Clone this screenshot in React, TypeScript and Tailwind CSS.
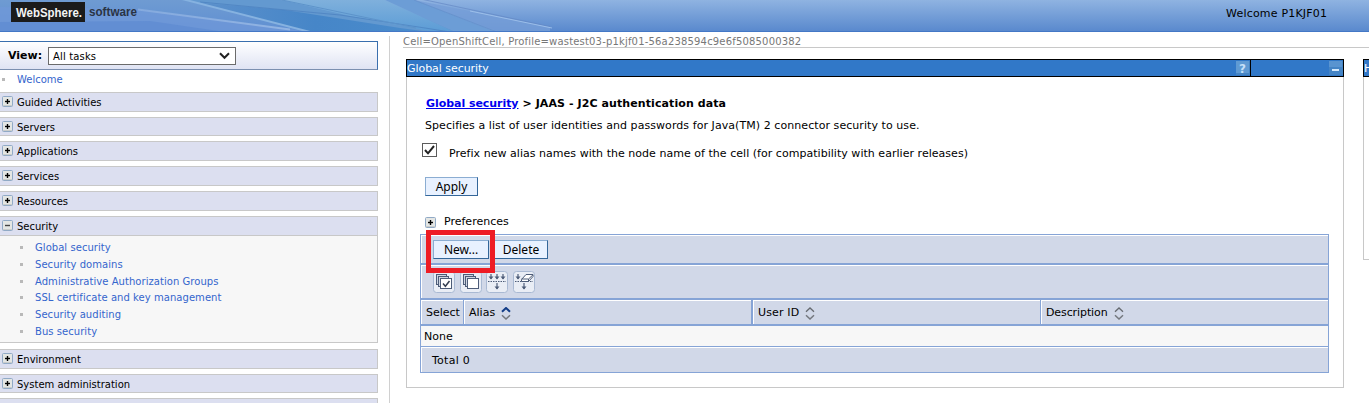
import React from "react";

function Banner() {
  return (
    <header className="relative h-8 w-full shrink-0 overflow-hidden">
      <svg className="block h-8 w-full" viewBox="0 0 1369 32" preserveAspectRatio="none">
        <defs>
          <linearGradient id="sky" x1="0" y1="0" x2="0" y2="1">
            <stop offset="0" stopColor="#8fb3e1" />
            <stop offset="1" stopColor="#5888cd" />
          </linearGradient>
          <linearGradient id="left" x1="0" y1="0" x2="0" y2="1">
            <stop offset="0" stopColor="#6f9bd2" />
            <stop offset="1" stopColor="#5f8fd2" />
          </linearGradient>
          <linearGradient id="cyan" x1="0" y1="0" x2="0" y2="1">
            <stop offset="0" stopColor="#7fb0dc" />
            <stop offset="1" stopColor="#5b9cd6" />
          </linearGradient>
          <linearGradient id="deep" x1="0" y1="0" x2="1" y2="0">
            <stop offset="0" stopColor="#5c90cb" />
            <stop offset="0.5" stopColor="#4686c8" />
            <stop offset="1" stopColor="#4a8ccc" />
          </linearGradient>
          <linearGradient id="fade" gradientUnits="userSpaceOnUse" x1="138" y1="0" x2="290" y2="0">
            <stop offset="0" stopColor="#9cbce6" stopOpacity="0.5" />
            <stop offset="1" stopColor="#9cbce6" stopOpacity="0.8" />
          </linearGradient>
        </defs>
        <rect width="1369" height="32" fill="url(#sky)" />
        <path d="M0 0H285L420 32H0Z" fill="url(#left)" />
        <path d="M0 7L138 9L290 29L310 32H0Z" fill="#7199d9" opacity="0.7" />
        <path d="M0 22L150 21L225 32H0Z" fill="#5c88d0" opacity="0.6" />
        <path d="M182 0H280L415 26L460 32H312Z" fill="#6399d0" />
        <path d="M200 3L285 10L400 28L430 32H310Z" fill="url(#deep)" />
        <path d="M282 0H385L455 32H435L350 16Z" fill="url(#cyan)" />
        <path d="M200 2L340 15L425 28L450 32" stroke="#4a80be" strokeWidth="0.7" fill="none" />
        <path d="M385 0H414L500 32H455Z" fill="#6c9dd6" />
        <path d="M414 0L550 27V32H495Z" fill="#769dd7" opacity="0.8" />
        <path d="M282 0L416 28" stroke="#5d93ca" strokeWidth="1" />
        <path d="M414 0L497 32" stroke="#6490cc" strokeWidth="0.8" />
        <path d="M416 -2L550 26.5" stroke="#6488c4" strokeWidth="0.7" />
        <path d="M470 11L552 28" stroke="#a6c6ed" strokeWidth="0.8" />
        <path d="M138 9.5L290 29.5" stroke="url(#fade)" strokeWidth="1.8" />
        <path d="M182 -1L310 32" stroke="#86b2e0" strokeWidth="2" />
        <rect y="31" width="1369" height="1" fill="#4478c6" />
        <rect x="11" y="2" width="74" height="20" fill="#1b1b1b" />
        <text x="16" y="16.5" textLength="66" lengthAdjust="spacingAndGlyphs" fill="#f4f4f4" fontFamily="Liberation Sans, sans-serif" fontWeight="700" fontSize="13.5">WebSphere.</text>
        <text x="89" y="16" textLength="48" lengthAdjust="spacingAndGlyphs" fill="#2a3444" fontFamily="Liberation Sans, sans-serif" fontWeight="700" fontSize="13">software</text>
      </svg>
      <div className="absolute top-[7px] left-[1226px] text-[11px] leading-[14px] tracking-[0.2px] whitespace-nowrap">
        Welcome P1KJF01
      </div>
    </header>
  );
}

function Toggle({ open = false }: { open?: boolean }) {
  return (
    <svg className="block size-[11px] shrink-0" viewBox="0 0 11 11">
      <rect x="0.5" y="0.5" width="10" height="10" rx="1" fill="#e4e6e4" stroke="#91aac6" />
      <path d="M1 9.5H10" stroke="#c9cccb" />
      <path d="M3 5.5H8" stroke={open ? "#444" : "#000"} strokeWidth="1.4" />
      {!open && <path d="M5.5 3V8" stroke="#000" strokeWidth="1.4" />}
    </svg>
  );
}

function NavRow({ label, className = "h-5", open = false }: { label: string; className?: string; open?: boolean }) {
  return (
    <div className={`flex shrink-0 items-start border border-l-0 border-[#c8c8c8] bg-[#dcdff0] pt-[3px] pl-[2px] ${className}`}>
      <Toggle open={open} />
      <span className="ml-1 text-[10px] leading-[14px]">{label}</span>
    </div>
  );
}

const tasks = [
  { label: "Global security", cls: "h-[17px]" },
  { label: "Security domains", cls: "h-[17px]" },
  { label: "Administrative Authorization Groups", cls: "h-4" },
  { label: "SSL certificate and key management", cls: "h-[17px]" },
  { label: "Security auditing", cls: "h-[17px]" },
  { label: "Bus security", cls: "h-[17px]" },
];

function Sidebar() {
  return (
    <aside className="flex h-[371px] w-[378px] shrink-0 flex-col overflow-hidden pt-[9px]">
      <div className="flex h-[29px] shrink-0 items-start border border-l-0 border-[#3a6fae] border-b-[#7b8fb0] bg-linear-to-b from-white to-[#dfe3f3] pt-[5px] pl-2">
        <span className="w-10 pt-[2px] text-[11px] leading-[14px] font-bold">View:</span>
        <div className="flex h-[18px] w-[188px] items-start justify-between border border-[#6b6b6b] bg-white pr-[5px] pl-1">
          <span className="pt-[2px] text-[10px] leading-[14px] tracking-[0.15px]">All tasks</span>
          <svg className="mt-1 h-[8px] w-[11px]" viewBox="0 0 11 8">
            <path d="M1 1.2L5.5 5.8L10 1.2" fill="none" stroke="#222" strokeWidth="2" />
          </svg>
        </div>
      </div>
      <div className="flex h-[22px] shrink-0 items-start pt-[3px]">
        <span className="mt-[5px] ml-[2px] size-[3px] bg-[#b9b9b9]" />
        <span className="ml-3 text-[10px] leading-[14px] text-[#3465cd]">Welcome</span>
      </div>
      <NavRow label="Guided Activities" />
      <NavRow label="Servers" className="mt-[5px] h-[19px]" />
      <NavRow label="Applications" className="mt-[5px] h-5" />
      <NavRow label="Services" className="mt-[5px] h-5" />
      <NavRow label="Resources" className="mt-[5px] h-5" />
      <NavRow label="Security" open className="mt-[5px] h-5" />
      <ul className="h-[107px] shrink-0 border-r border-b border-[#c8c8c8] bg-[#f7f7f7] pt-1">
        {tasks.map((t) => (
          <li key={t.label} className={`flex items-start ${t.cls}`}>
            <span className="mt-[6px] ml-5 size-[3px] bg-[#b9b9b9]" />
            <span className="ml-3 pt-px text-[10px] leading-[14px] tracking-[0.05px] text-[#3465cd]">{t.label}</span>
          </li>
        ))}
      </ul>
      <NavRow label="Environment" className="mt-[6px] h-5" />
      <NavRow label="System administration" className="mt-[5px] h-[19px]" />
      <div className="mt-[5px] h-5 shrink-0 border border-l-0 border-[#c8c8c8] bg-[#dcdff0]" />
    </aside>
  );
}

function Button({ children, className }: { children: React.ReactNode; className: string }) {
  return (
    <button className={`flex items-start justify-center border border-[#8badd2] border-r-[#336699] border-b-[#336699] bg-[#e8f1ff] font-['Noto_Sans',sans-serif] text-[12px] leading-[14px] whitespace-nowrap ${className}`}>
      {children}
    </button>
  );
}

function IconButton({ children, className = "" }: { children: React.ReactNode; className?: string }) {
  return (
    <svg className={`block h-[22px] w-[22px] shrink-0 ${className}`} viewBox="0 0 22 22" fill="none">
      <rect x="0.5" y="0.5" width="21" height="21" rx="3" fill="#e9edf5" stroke="#a9b9d3" />
      {children}
    </svg>
  );
}

const ink = "#4d5c78";

function Stack() {
  return (
    <>
      <rect x="3.5" y="3.5" width="10" height="10" fill="#cfd6e2" stroke={ink} />
      <rect x="5.5" y="5.5" width="10" height="10" fill="#cfd6e2" stroke={ink} />
      <rect x="7.5" y="7.5" width="11" height="10" fill="#fff" stroke={ink} />
    </>
  );
}

function DownArrow({ x, y, h = 5 }: { x: number; y: number; h?: number }) {
  return (
    <>
      <path d={`M${x} ${y}v${h}`} stroke={ink} strokeWidth="1.2" />
      <path d={`M${x - 2.5} ${y + h - 2.5}h5l-2.5 3z`} fill={ink} />
    </>
  );
}

function Sort({ active = false, className }: { active?: boolean; className: string }) {
  return (
    <svg className={`block h-[13px] w-[10px] ${className}`} viewBox="0 0 10 13" fill="none" strokeWidth="1.5">
      <path d="M1 4.7L5 1L9 4.7" stroke={active ? "#123c86" : "#666a70"} strokeWidth={active ? 2 : 1.3} />
      <path d="M1 8.3L5 12L9 8.3" stroke="#74787e" />
    </svg>
  );
}

const cell = "flex items-start border-t border-l border-white bg-[#d1d8e8]";

function DataTable() {
  return (
    <div className="ml-[13px] flex h-[139px] w-[909px] flex-col border border-[#86a4d6]">
      <div className={`h-7 shrink-0 ${cell} pt-1 pl-[11px]`}>
        <div className="relative">
          <Button className="h-[19px] w-14 pt-[2px]">New...</Button>
          <div className="absolute -top-[10px] -left-[7px] h-[43px] w-[69px] border-5 border-[#ee1c25]" />
        </div>
        <Button className="ml-[5px] h-[19px] w-[54px] pt-[2px]">Delete</Button>
      </div>
      <div className="h-[2px] shrink-0 bg-[#86a4d6]" />
      <div className={`h-[33px] shrink-0 ${cell} pt-[5px] pl-[11px]`}>
        <IconButton>
          <Stack />
          <path d="M10 12.5L12.4 15.3L16.5 10" stroke="#333d50" strokeWidth="1.5" />
        </IconButton>
        <IconButton className="ml-[5px]"><Stack /></IconButton>
        <IconButton className="ml-[4px]">
          <DownArrow x={5} y={3} />
          <DownArrow x={11} y={3} />
          <DownArrow x={17} y={3} />
          <path d="M2 10.5H20" stroke={ink} strokeDasharray="1.5 1" />
          <DownArrow x={11} y={12} h={6} />
        </IconButton>
        <IconButton className="ml-[5px]">
          <DownArrow x={5} y={3} />
          <path d="M2 10.5H20" stroke={ink} strokeDasharray="1.5 1" />
          <DownArrow x={11} y={12} h={6} />
          <path d="M8.5 8.5L13 3.5H20V5.5L15.5 10.5H8.5Z" fill="#fff" stroke={ink} />
          <path d="M8.5 8H15.5L20 3.8M15.5 8V10.5" stroke={ink} />
        </IconButton>
      </div>
      <div className="h-[2px] shrink-0 bg-[#86a4d6]" />
      <div className="flex h-6 shrink-0 text-[11px] leading-[14px] whitespace-nowrap">
        <div className={`w-[42px] ${cell} pt-[5px] pl-1`}>Select</div>
        <div className="w-px bg-[#86a4d6]" />
        <div className={`w-[287px] ${cell} pt-[5px] pl-1`}>
          <span className="w-[32px]">Alias</span>
          <Sort active className="mt-px" />
        </div>
        <div className="w-[2px] bg-[#86a4d6]" />
        <div className={`w-[287px] ${cell} pt-[5px] pl-1`}>
          <span className="w-[47px] tracking-[0.15px]">User ID</span>
          <Sort className="mt-px" />
        </div>
        <div className="w-px bg-[#86a4d6]" />
        <div className={`flex-1 ${cell} pt-[5px] pl-1`}>
          <span className="w-[68px] tracking-[-0.1px]">Description</span>
          <Sort className="mt-px" />
        </div>
      </div>
      <div className="h-[2px] shrink-0 bg-[#86a4d6]" />
      <div className="h-5 shrink-0 bg-[#f7f7f7] pt-1 pl-[3px] text-[11px] leading-[14px]">None</div>
      <div className="h-px shrink-0 bg-[#86a4d6]" />
      <div className={`flex-1 ${cell} pt-[6px] pl-[10px] text-[11px] leading-[14px] tracking-[0.25px]`}>Total 0</div>
    </div>
  );
}

function SecurityPortlet() {
  return (
    <section className="h-[329px] w-[938px] shrink-0 border border-t-0 border-[#c8c8c8]">
      <div className="-mx-px flex h-[18px] border border-black bg-[#3178c8]">
        <div className="flex w-[843px] items-start justify-between">
          <span className="pt-[2px] text-[11px] leading-[14px] tracking-[-0.05px] text-white">Global security</span>
          <svg className="mt-px block size-[14px]" viewBox="0 0 14 14">
            <rect width="14" height="14" fill="#4685c4" />
            <rect width="13" height="12" fill="#5f9ad3" />
            <text x="6.5" y="11.5" textAnchor="middle" fontFamily="DejaVu Sans, sans-serif" fontSize="12" fontWeight="700" fill="#c6e0f8">?</text>
          </svg>
        </div>
        <div className="w-px bg-black" />
        <div className="flex flex-1 justify-end">
          <svg className="mt-px block size-[14px]" viewBox="0 0 14 14">
            <rect width="14" height="14" fill="#4484c5" />
            <rect width="13" height="6" fill="#5994d0" />
            <rect x="3" y="8" width="7" height="2" fill="#d3e8fb" />
          </svg>
        </div>
      </div>
      <h1 className="mt-5 ml-[19px] text-[11px] leading-[14px] font-bold">
        <a className="tracking-[-0.05px] text-[#0000ee] underline">Global security</a>
        <span className="tracking-[0.09px]"> &gt; JAAS - J2C authentication data</span>
      </h1>
      <p className="mt-2 ml-[18px] text-[11px] leading-[14px] tracking-[0.066px]">
        Specifies a list of user identities and passwords for Java(TM) 2 connector security to use.
      </p>
      <label className="mt-[10px] ml-[15px] flex h-[17px] items-start">
        <svg className="block h-[14px] w-[15px]" viewBox="0 0 15 14">
          <rect x="0.5" y="0.5" width="14" height="13" fill="#fff" stroke="#5c5c5c" />
          <path d="M3 7L6 10.3L12 3" fill="none" stroke="#222" strokeWidth="2" />
        </svg>
        <span className="ml-3 pt-1 text-[11px] leading-[14px] tracking-[0.033px]">
          Prefix new alias names with the node name of the cell (for compatibility with earlier releases)
        </span>
      </label>
      <Button className="mt-[17px] ml-[18px] h-[19px] w-[53px] pt-[2px]">Apply</Button>
      <div className="mt-[18px] ml-[18px] flex h-5 items-start">
        <span className="mt-[3px]"><Toggle /></span>
        <span className="ml-2 pt-px text-[11px] leading-[14px]">Preferences</span>
      </div>
      <DataTable />
    </section>
  );
}

export default function App() {
  return (
    <div className="flex h-[403px] w-[1369px] flex-col overflow-hidden bg-white font-['DejaVu_Sans',sans-serif] text-black">
      <Banner />
      <div className="flex">
        <Sidebar />
        <div className="mt-1 ml-[11px] h-[367px] w-px bg-[#d0d0d0]" />
        <main className="ml-[13px] w-[966px] overflow-hidden pt-[2px]">
          <div className="h-[14px] border-b border-[#c8c8c8] text-[10px] leading-[15px] tracking-[0.18px] text-[#777]">
            Cell=OpenShiftCell, Profile=wastest03-p1kjf01-56a238594c9e6f5085000382
          </div>
          <div className="mt-[11px] ml-[3px] flex gap-[19px]">
            <SecurityPortlet />
            <section className="h-[201px] w-40 shrink-0 border border-t-0 border-[#c8c8c8]">
              <div className="-mx-px h-[18px] border border-black bg-[#3178c8] pt-[2px] text-[11px] leading-[14px] text-white">Help</div>
            </section>
          </div>
        </main>
      </div>
    </div>
  );
}
